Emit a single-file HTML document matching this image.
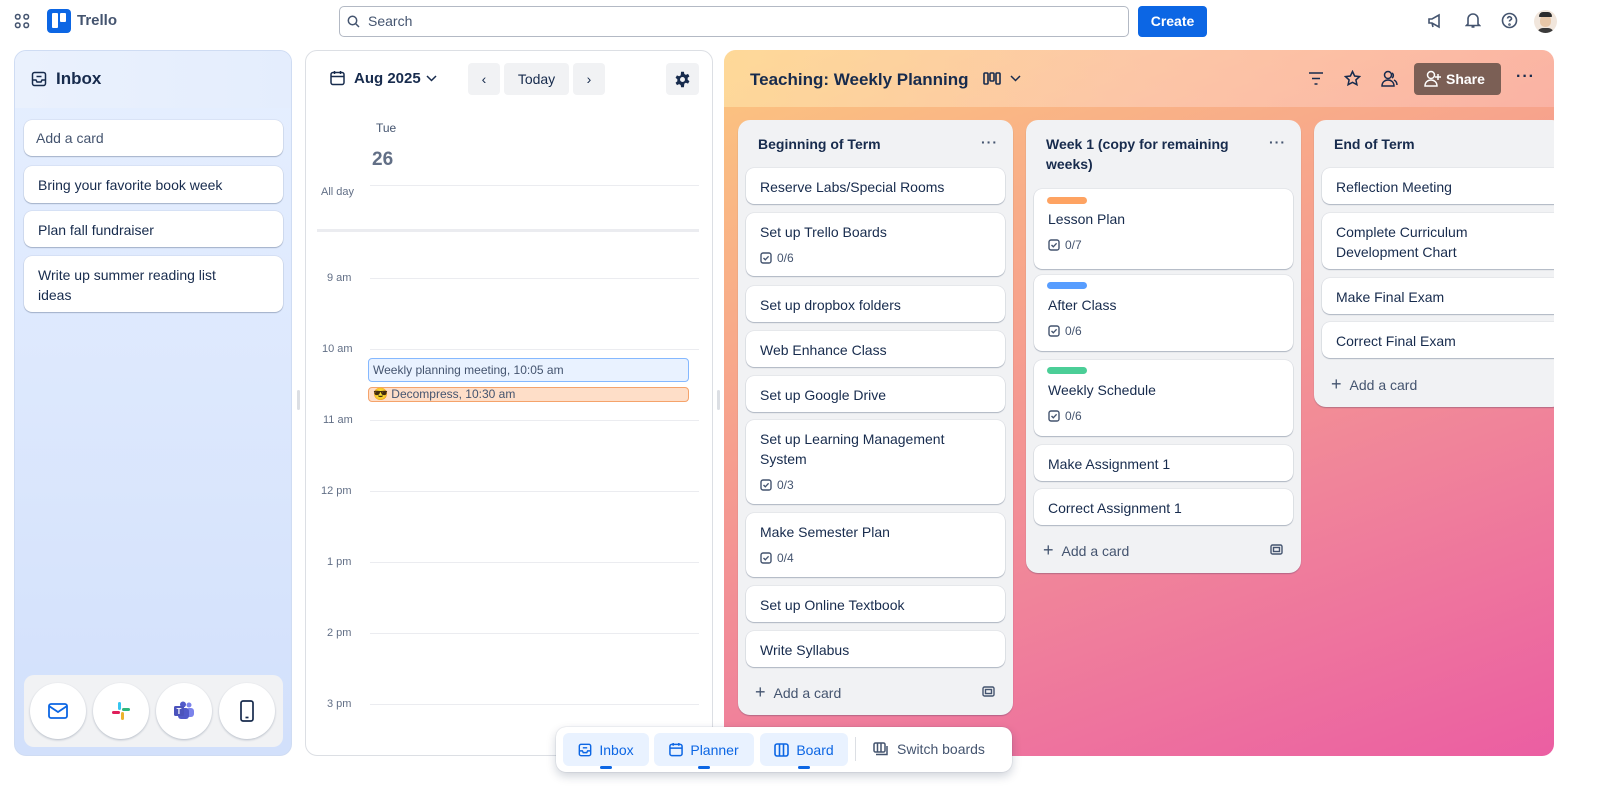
<!DOCTYPE html>
<html><head><meta charset="utf-8"><style>
*{box-sizing:border-box;margin:0;padding:0}
body{width:1600px;height:802px;background:#fff;font-family:"Liberation Sans",sans-serif;color:#172b4d;position:relative;overflow:hidden;font-size:14px}
.a{position:absolute}
.card{position:absolute;background:#fff;border-radius:8px;box-shadow:0 1px 1px rgba(9,30,66,.25),0 0 1px rgba(9,30,66,.31);padding:9px 14px;font-size:14px;line-height:20px;color:#172b4d}
.cl{font-size:12px;color:#44546f;margin-top:6px;display:flex;align-items:center;gap:5px}
.list{position:absolute;background:#f1f2f4;border-radius:12px;box-shadow:0 1px 1px rgba(9,30,66,.25)}
.lt{position:absolute;font-weight:bold;font-size:14px;line-height:20px;color:#172b4d}
.dots{position:absolute;font-weight:bold;color:#44546f;font-size:14px;letter-spacing:1px}
.add{position:absolute;font-size:14px;color:#44546f}
.hr{position:absolute;left:317px;width:382px;height:1px;background:#ebecf0}
.hl{position:absolute;font-size:11px;color:#626f86;left:327px}
.btn{position:absolute;background:#f1f2f4;border-radius:4px;display:flex;align-items:center;justify-content:center;font-size:14px;color:#172b4d}
.circ{position:absolute;width:56px;height:56px;border-radius:50%;background:#fff;box-shadow:0 1px 2px rgba(9,30,66,.25);top:683px;display:flex;align-items:center;justify-content:center}
.nb{position:absolute;top:733px;height:33px;background:#e9f2ff;border-radius:6px;color:#0c66e4;font-size:14px;display:flex;align-items:center;justify-content:center;gap:7px}
.nb::after{content:"";position:absolute;bottom:-3px;left:50%;margin-left:-6px;width:12px;height:3px;background:#0c66e4;border-radius:2px}
.lab{position:absolute;height:7px;width:40px;border-radius:4px}
</style></head><body>
<svg width="0" height="0" style="position:absolute"><symbol id="ck" viewBox="0 0 12 12"><rect x="1" y="1" width="10" height="10" rx="2" fill="none" stroke="#44546f" stroke-width="1.4"/><path d="M3.5 6l1.8 1.8L8.6 4.3" fill="none" stroke="#44546f" stroke-width="1.4"/></symbol></svg>
<!-- top bar -->
<svg class="a" style="left:14px;top:13px" width="16" height="16" viewBox="0 0 16 16" fill="none" stroke="#44546f" stroke-width="1.5"><rect x="1.5" y="1.5" width="4.5" height="4.5" rx="2"/><rect x="10" y="1.5" width="4.5" height="4.5" rx="2"/><rect x="1.5" y="10" width="4.5" height="4.5" rx="2"/><rect x="10" y="10" width="4.5" height="4.5" rx="2"/></svg>
<div class="a" style="left:47px;top:9px;width:24px;height:24px;background:#0c66e4;border-radius:4px"><div class="a" style="left:5px;top:4px;width:6px;height:15px;background:#fff;border-radius:1px"></div><div class="a" style="left:13px;top:4px;width:6px;height:9px;background:#fff;border-radius:1px"></div></div>
<div class="a" style="left:77px;top:12px;font-weight:bold;font-size:15px;color:#44546f">Trello</div>
<div class="a" style="left:339px;top:6px;width:790px;height:31px;border:1px solid #b3b9c4;border-radius:5px"></div>
<svg class="a" style="left:347px;top:15px" width="13" height="13" viewBox="0 0 13 13" fill="none" stroke="#44546f" stroke-width="1.5"><circle cx="5.5" cy="5.5" r="4.2"/><path d="M8.5 8.5l3.5 3.5"/></svg>
<div class="a" style="left:368px;top:13px;font-size:14px;color:#44546f">Search</div>
<div class="a" style="left:1138px;top:6px;width:69px;height:31px;background:#0c66e4;border-radius:4px;color:#fff;font-weight:bold;font-size:14px;text-align:center;line-height:31px">Create</div>
<svg class="a" style="left:1427px;top:13px" width="17" height="16" viewBox="0 0 17 16" fill="none" stroke="#44546f" stroke-width="1.6"><path d="M2 6h3l7-4v12l-7-4H2z M5 10l1 4"/></svg>
<svg class="a" style="left:1465px;top:12px" width="16" height="17" viewBox="0 0 16 17" fill="none" stroke="#44546f" stroke-width="1.6"><path d="M3 12V7a5 5 0 0110 0v5l1.5 1.5h-13z M6.5 15h3"/></svg>
<svg class="a" style="left:1501px;top:12px" width="17" height="17" viewBox="0 0 17 17" fill="none" stroke="#44546f" stroke-width="1.6"><circle cx="8.5" cy="8.5" r="7"/><path d="M6.5 6.5a2 2 0 114 .5c-.5 1-2 1-2 2.5"/><circle cx="8.5" cy="12.5" r=".5"/></svg>
<div class="a" style="left:1534px;top:10px;width:23px;height:23px;border-radius:50%;background:#f1e6dc;overflow:hidden"><div class="a" style="left:6px;top:5px;width:11px;height:12px;background:#e8c7a8;border-radius:5px"></div><div class="a" style="left:5px;top:2px;width:13px;height:5px;background:#2b2b2b;border-radius:5px 5px 1px 1px"></div><div class="a" style="left:3px;top:18px;width:17px;height:8px;background:#3a3a3a;border-radius:6px 6px 0 0"></div></div>

<!-- Inbox panel -->
<div class="a" style="left:14px;top:50px;width:278px;height:706px;border-radius:12px;border:1px solid #cfdcf3;background:linear-gradient(180deg,#e6efff 0%,#d2e0fb 100%);overflow:hidden">
<div class="a" style="left:0;top:0;width:278px;height:57px;background:linear-gradient(90deg,#eaf1fd,#e4edfd)"></div></div>
<svg class="a" style="left:31px;top:71px" width="16" height="16" viewBox="0 0 16 16" fill="none" stroke="#172b4d" stroke-width="1.5"><rect x="1.5" y="1.5" width="13" height="13" rx="2"/><path d="M1.5 9h3.5l1 2h4l1-2h3.5"/><path d="M5.5 5.5h5"/></svg>
<div class="a" style="left:56px;top:69px;font-weight:bold;font-size:17px">Inbox</div>
<div class="card" style="left:24px;top:120px;width:259px;height:36px;color:#44546f;padding:8px 12px">Add a card</div>
<div class="card" style="left:24px;top:166px;width:259px;height:37px">Bring your favorite book week</div>
<div class="card" style="left:24px;top:211px;width:259px;height:36px">Plan fall fundraiser</div>
<div class="card" style="left:24px;top:256px;width:259px;height:56px;padding-right:50px">Write up summer reading list ideas</div>
<div class="a" style="left:24px;top:675px;width:259px;height:72px;background:#f1f2f4;border-radius:10px"></div>
<div class="circ" style="left:30px"><svg width="20" height="16" viewBox="0 0 20 16" fill="none" stroke="#0c66e4" stroke-width="1.8"><rect x="1" y="1" width="18" height="14" rx="2"/><path d="M1 3l9 6 9-6"/></svg></div>
<div class="circ" style="left:93px"><svg width="20" height="20" viewBox="0 0 20 20"><rect x="7" y="1" width="3" height="8" rx="1.5" fill="#36c5f0"/><rect x="1" y="10" width="8" height="3" rx="1.5" fill="#e01e5a"/><rect x="10" y="11" width="3" height="8" rx="1.5" fill="#ecb22e"/><rect x="11" y="7" width="8" height="3" rx="1.5" fill="#2eb67d"/></svg></div>
<div class="circ" style="left:156px"><svg width="22" height="20" viewBox="0 0 22 20"><circle cx="16" cy="4" r="2.5" fill="#7b83eb"/><rect x="13" y="7" width="8" height="9" rx="3" fill="#7b83eb"/><circle cx="10" cy="3.5" r="3" fill="#5059c9"/><rect x="5" y="7" width="11" height="11" rx="3" fill="#5059c9"/><rect x="1" y="5" width="10" height="10" rx="1.5" fill="#4b53bc"/><text x="6" y="13" font-size="8" fill="#fff" text-anchor="middle" font-family="Liberation Sans" font-weight="bold">T</text></svg></div>
<div class="circ" style="left:219px"><svg width="14" height="22" viewBox="0 0 14 22" fill="none" stroke="#172b4d" stroke-width="1.7"><rect x="1" y="1" width="12" height="20" rx="2"/><path d="M5.5 17.5h3"/></svg></div>

<!-- Planner -->
<div class="a" style="left:305px;top:50px;width:408px;height:706px;border-radius:12px;border:1px solid #dcdfe4;background:#fff"></div>
<svg class="a" style="left:330px;top:70px" width="15" height="16" viewBox="0 0 15 16" fill="none" stroke="#172b4d" stroke-width="1.5"><rect x="1" y="2.5" width="13" height="12" rx="2"/><path d="M1 6.5h13M4.5 1v3M10.5 1v3"/></svg>
<div class="a" style="left:354px;top:70px;font-size:15px;font-weight:bold;color:#172b4d">Aug 2025</div>
<svg class="a" style="left:426px;top:75px" width="11" height="7" viewBox="0 0 11 7" fill="none" stroke="#172b4d" stroke-width="1.5"><path d="M1 1l4.5 4.5L10 1"/></svg>
<div class="btn" style="left:468px;top:63px;width:32px;height:32px">‹</div>
<div class="btn" style="left:504px;top:63px;width:65px;height:32px">Today</div>
<div class="btn" style="left:573px;top:63px;width:32px;height:32px">›</div>
<div class="btn" style="left:666px;top:63px;width:33px;height:32px"><svg width="17" height="17" viewBox="0 0 24 24"><path fill="#172b4d" fill-rule="evenodd" d="M10 1h4l.6 3.2 2.2 1.2 3-1.3 2 3.4-2.5 2.1v2.8l2.5 2.1-2 3.4-3-1.3-2.2 1.2L14 23h-4l-.6-3.2-2.2-1.2-3 1.3-2-3.4 2.5-2.1v-2.8L2.2 9.5l2-3.4 3 1.3 2.2-1.2zM12 8.5a3.5 3.5 0 100 7 3.5 3.5 0 000-7z"/></svg></div>
<div class="a" style="left:376px;top:121px;font-size:12px;color:#44546f">Tue</div>
<div class="a" style="left:372px;top:149px;font-size:19px;font-weight:bold;color:#626f86">26</div>
<div class="a" style="left:370px;top:185px;width:329px;height:1px;background:#ebecf0"></div>
<div class="hl" style="left:321px;top:186px">All day</div>
<div class="a" style="left:317px;top:229px;width:382px;height:3px;background:#ebecf0"></div>
<div class="hr" style="top:278px;left:370px;width:329px"></div><div class="hl" style="top:272px">9 am</div>
<div class="hr" style="top:349px;left:370px;width:329px"></div><div class="hl" style="top:343px;left:322px">10 am</div>
<div class="hr" style="top:420px;left:370px;width:329px"></div><div class="hl" style="top:414px;left:323px">11 am</div>
<div class="hr" style="top:491px;left:370px;width:329px"></div><div class="hl" style="top:485px;left:321px">12 pm</div>
<div class="hr" style="top:562px;left:370px;width:329px"></div><div class="hl" style="top:556px">1 pm</div>
<div class="hr" style="top:633px;left:370px;width:329px"></div><div class="hl" style="top:627px">2 pm</div>
<div class="hr" style="top:704px;left:370px;width:329px"></div><div class="hl" style="top:698px">3 pm</div>
<div class="a" style="left:368px;top:358px;width:321px;height:24px;background:#e9f2ff;border:1px solid #85b8ff;border-radius:4px;font-size:12px;color:#44546f;padding:4px 4px;line-height:14px">Weekly planning meeting, 10:05 am</div>
<div class="a" style="left:368px;top:387px;width:321px;height:15px;background:#fedec8;border:1px solid #f5a36b;border-radius:4px;font-size:12px;color:#44546f;padding:0 4px;line-height:13px">😎 Decompress, 10:30 am</div>
<div class="a" style="left:297px;top:390px;width:3px;height:20px;background:#dcdfe4;border-radius:2px"></div>
<div class="a" style="left:717px;top:390px;width:3px;height:20px;background:#dcdfe4;border-radius:2px"></div>

<!-- Board -->
<div class="a" style="left:724px;top:50px;width:830px;height:706px;border-radius:12px;overflow:hidden;background:linear-gradient(160deg,#fcc67e 0%,#f7a48c 35%,#f0849a 65%,#eb5ea2 100%)">
<div class="a" style="left:0;top:0;width:830px;height:57px;background:linear-gradient(90deg,rgba(255,230,170,.6),rgba(255,215,200,.5),rgba(255,200,200,.4))"></div></div>
<div class="a" style="left:750px;top:70px;font-weight:bold;font-size:17px;color:#172b4d">Teaching: Weekly Planning</div>
<svg class="a" style="left:983px;top:72px" width="18" height="13" viewBox="0 0 18 13" fill="none" stroke="#172b4d" stroke-width="1.6"><rect x="1" y="1" width="4" height="11" rx="1"/><rect x="7" y="1" width="4" height="8" rx="1"/><rect x="13" y="1" width="4" height="11" rx="1"/></svg>
<svg class="a" style="left:1010px;top:75px" width="11" height="7" viewBox="0 0 11 7" fill="none" stroke="#172b4d" stroke-width="1.5"><path d="M1 1l4.5 4.5L10 1"/></svg>
<svg class="a" style="left:1308px;top:71px" width="16" height="15" viewBox="0 0 16 15" fill="none" stroke="#172b4d" stroke-width="1.6"><path d="M1 2h14M4 7.5h8M6.5 13h3"/></svg>
<svg class="a" style="left:1344px;top:70px" width="17" height="17" viewBox="0 0 17 17" fill="none" stroke="#172b4d" stroke-width="1.5"><path d="M8.5 1.5l2.1 4.5 4.9.6-3.6 3.3 1 4.8-4.4-2.4-4.4 2.4 1-4.8L1.5 6.6l4.9-.6z"/></svg>
<svg class="a" style="left:1380px;top:70px" width="18" height="17" viewBox="0 0 18 17" fill="none" stroke="#172b4d" stroke-width="1.5"><circle cx="8" cy="5" r="3.5"/><path d="M2 16c0-4 3-6 6-6s6 2 6 6z"/><path d="M12 3a3 3 0 010 5M14 10c2 1 3 3 3 5"/></svg>
<div class="a" style="left:1414px;top:63px;width:87px;height:32px;background:#7b5f55;border-radius:4px;color:#fff;font-weight:bold;font-size:14px;line-height:32px;padding-left:32px">Share</div>
<svg class="a" style="left:1424px;top:70px" width="18" height="17" viewBox="0 0 18 17" fill="none" stroke="#fff" stroke-width="1.5"><circle cx="7" cy="5" r="3.5"/><path d="M1 16c0-4 3-6 6-6s6 2 6 6z"/><path d="M14 4v6M11 7h6"/></svg>
<div class="a" style="left:1516px;top:68px;font-weight:bold;font-size:16px;color:#172b4d;letter-spacing:1px">···</div>

<!-- List 1 -->
<div class="list" style="left:738px;top:120px;width:275px;height:595px"></div>
<div class="lt" style="left:758px;top:134px">Beginning of Term</div>
<div class="dots" style="left:981px;top:134px">···</div>
<div class="card" style="left:746px;top:168px;width:259px;height:36px">Reserve Labs/Special Rooms</div>
<div class="card" style="left:746px;top:213px;width:259px;height:63px">Set up Trello Boards<div class="cl"><svg width="12" height="12"><use href="#ck"/></svg>0/6</div></div>
<div class="card" style="left:746px;top:286px;width:259px;height:36px">Set up dropbox folders</div>
<div class="card" style="left:746px;top:331px;width:259px;height:36px">Web Enhance Class</div>
<div class="card" style="left:746px;top:376px;width:259px;height:36px">Set up Google Drive</div>
<div class="card" style="left:746px;top:420px;width:259px;height:84px">Set up Learning Management System<div class="cl"><svg width="12" height="12"><use href="#ck"/></svg>0/3</div></div>
<div class="card" style="left:746px;top:513px;width:259px;height:64px">Make Semester Plan<div class="cl"><svg width="12" height="12"><use href="#ck"/></svg>0/4</div></div>
<div class="card" style="left:746px;top:586px;width:259px;height:36px">Set up Online Textbook</div>
<div class="card" style="left:746px;top:631px;width:259px;height:36px">Write Syllabus</div>
<div class="add" style="left:755px;top:682px"><span style="font-size:18px;margin-right:8px">+</span>Add a card</div>
<svg class="a" style="left:982px;top:685px" width="13" height="13" viewBox="0 0 13 13" fill="none" stroke="#44546f" stroke-width="1.4"><rect x="1" y="2" width="11" height="9" rx="1.5"/><rect x="3.5" y="4.5" width="6" height="4"/></svg>

<!-- List 2 -->
<div class="list" style="left:1026px;top:120px;width:275px;height:453px"></div>
<div class="lt" style="left:1046px;top:134px;width:210px">Week 1 (copy for remaining weeks)</div>
<div class="dots" style="left:1269px;top:134px">···</div>
<div class="card" style="left:1034px;top:189px;width:259px;height:80px;padding-top:20px">Lesson Plan<div class="cl"><svg width="12" height="12"><use href="#ck"/></svg>0/7</div></div>
<div class="lab" style="left:1047px;top:197px;background:#fea362"></div>
<div class="card" style="left:1034px;top:275px;width:259px;height:76px;padding-top:20px">After Class<div class="cl"><svg width="12" height="12"><use href="#ck"/></svg>0/6</div></div>
<div class="lab" style="left:1047px;top:282px;background:#579dff"></div>
<div class="card" style="left:1034px;top:360px;width:259px;height:76px;padding-top:20px">Weekly Schedule<div class="cl"><svg width="12" height="12"><use href="#ck"/></svg>0/6</div></div>
<div class="lab" style="left:1047px;top:367px;background:#4bce97"></div>
<div class="card" style="left:1034px;top:445px;width:259px;height:36px">Make Assignment 1</div>
<div class="card" style="left:1034px;top:489px;width:259px;height:36px">Correct Assignment 1</div>
<div class="add" style="left:1043px;top:540px"><span style="font-size:18px;margin-right:8px">+</span>Add a card</div>
<svg class="a" style="left:1270px;top:543px" width="13" height="13" viewBox="0 0 13 13" fill="none" stroke="#44546f" stroke-width="1.4"><rect x="1" y="2" width="11" height="9" rx="1.5"/><rect x="3.5" y="4.5" width="6" height="4"/></svg>

<!-- List 3 -->
<div class="list" style="left:1314px;top:120px;width:250px;height:287px"></div>
<div class="lt" style="left:1334px;top:134px">End of Term</div>
<div class="card" style="left:1322px;top:168px;width:250px;height:36px">Reflection Meeting</div>
<div class="card" style="left:1322px;top:213px;width:250px;height:56px;padding-right:50px">Complete Curriculum Development Chart</div>
<div class="card" style="left:1322px;top:278px;width:250px;height:36px">Make Final Exam</div>
<div class="card" style="left:1322px;top:322px;width:250px;height:36px">Correct Final Exam</div>
<div class="add" style="left:1331px;top:374px"><span style="font-size:18px;margin-right:8px">+</span>Add a card</div>
<div class="a" style="left:1554px;top:50px;width:46px;height:706px;background:#fff"></div>

<!-- bottom nav -->
<div class="a" style="left:556px;top:727px;width:456px;height:45px;background:#fff;border-radius:10px;box-shadow:0 4px 10px rgba(9,30,66,.2),0 0 1px rgba(9,30,66,.3)"></div>
<div class="nb" style="left:563px;width:86px"><svg width="14" height="14" viewBox="0 0 16 16" fill="none" stroke="#0c66e4" stroke-width="1.6"><rect x="1.5" y="1.5" width="13" height="13" rx="2"/><path d="M1.5 9h3.5l1 2h4l1-2h3.5M5.5 5.5h5"/></svg>Inbox</div>
<div class="nb" style="left:654px;width:100px"><svg width="14" height="15" viewBox="0 0 15 16" fill="none" stroke="#0c66e4" stroke-width="1.6"><rect x="1" y="2.5" width="13" height="12" rx="2"/><path d="M1 6.5h13M4.5 1v3M10.5 1v3"/></svg>Planner</div>
<div class="nb" style="left:760px;width:88px"><svg width="15" height="14" viewBox="0 0 15 14" fill="none" stroke="#0c66e4" stroke-width="1.6"><rect x="1" y="1" width="13" height="12" rx="2"/><path d="M5.5 1v12M9.5 1v12"/></svg>Board</div>
<div class="a" style="left:855px;top:737px;width:1px;height:24px;background:#dcdfe4"></div>
<svg class="a" style="left:873px;top:742px" width="16" height="14" viewBox="0 0 16 14" fill="none" stroke="#44546f" stroke-width="1.5"><rect x="1" y="1" width="11" height="9" rx="1.5"/><path d="M4.5 1v9M8 1v9M3 12.5h11V4"/></svg>
<div class="a" style="left:897px;top:741px;font-size:14px;color:#44546f">Switch boards</div>
</body></html>
